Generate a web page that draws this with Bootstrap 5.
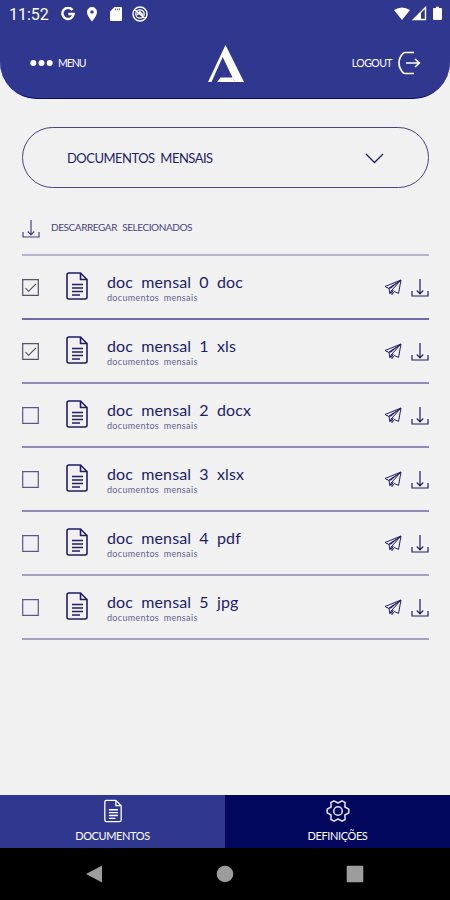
<!DOCTYPE html>
<html lang="pt">
<head>
<meta charset="utf-8">
<meta name="viewport" content="width=device-width, initial-scale=1">
<title>Documentos</title>
<link href="https://cdn.jsdelivr.net/npm/bootstrap@5.3.0/dist/css/bootstrap.min.css" rel="stylesheet">
<style>
:root{--ink:#211d66;--brand:#2f378f;--deep:#02065c}
body{font-family:Lato,"Open Sans",sans-serif;background:#f1f1f1;color:var(--ink);line-height:1}
svg{display:block;flex:none}
.screen{width:450px;height:900px}
.topbar{height:99px;background:var(--brand);border-bottom:1px solid #08087c;border-radius:0 0 37px 37px}
.status{height:28px;padding:0 6px 0 9px;font:400 16px Roboto,sans-serif}
.clock{width:39px;margin-right:13px;white-space:nowrap}
.pin{margin-left:9px}
.actions{height:70px;padding:0 29px 0 30px}
.side{width:160px}
.menu-text{font-size:10.500px;letter-spacing:-1.050px;margin-left:5px}
.logout-text{font-size:10.500px;letter-spacing:-.550px;margin-right:5px}
.main-area{padding:28px 21px 0 22px}
.picker{height:61px;border:1px solid #47437f;border-radius:31px;padding:2px 44px 0;background:none;color:var(--ink);font-size:13px;letter-spacing:-.520px;word-spacing:3px}
.bulk{height:66px;padding-top:15px;font-size:10px;letter-spacing:-.420px;word-spacing:3px;gap:11px;color:#48447e}
.bulk-text{padding-bottom:4px}
.files{border-top:2px solid #b5b4cb}
.file{height:64px;border-bottom:2px solid #8e8bb5}
.file:first-child{border-bottom-color:#706ca5}
.file:nth-child(n+5){border-bottom-color:#a3a1c3}
.tick{width:17px;height:17px;margin-right:27px}
.sheet{margin-bottom:2px}
.labels{margin-left:19px;padding-top:2px}
.fname{font-size:16px;letter-spacing:.120px;word-spacing:4px}
.fsub{font-size:9px;letter-spacing:.330px;word-spacing:2px;color:#625f8e;margin-top:3px}
.send{margin-right:9px}
.fetch{margin-top:2px}
.tabs{height:53px;font-size:11px}
.tab-on{background:var(--brand)}
.tab-off{background:var(--deep)}
.tabs span{margin-top:7px;letter-spacing:-.4px}
.sysnav{height:52px;padding:0 86px 0 85px}
</style>
<script src="https://cdn.jsdelivr.net/npm/bootstrap@5.3.0/dist/js/bootstrap.bundle.min.js"></script>
</head>
<body>
<svg width="0" height="0" class="position-absolute">
<symbol id="doc" viewBox="0 0 22 28"><path d="M3 1h11.500L21 7.500V25a2 2 0 0 1-2 2H3a2 2 0 0 1-2-2V3a2 2 0 0 1 2-2zM14.500 1v6.500H21" fill="none" stroke="currentColor" stroke-width="1.600" stroke-linejoin="round"/><path d="M6 12.500h11M6 16h11M6 19.500h11M6 23h8" stroke="currentColor" stroke-width="1.600"/></symbol>
<symbol id="down" viewBox="0 0 18 18"><path d="M9 0v14M5.800 11.500L9 14.800l3.200-3.300M1 12v5h16v-5" fill="none" stroke="currentColor" stroke-width="1.200"/></symbol>
<symbol id="send" viewBox="0 0 18 17"><path d="M17 1L1 7.500l4 2L17 1l-9 10v4.500l2.500-3 4 2L17 1M5 9.500l.8 5L8 11M5.800 14.500l4-3" fill="none" stroke="currentColor" stroke-width="1" stroke-linejoin="round"/><path d="M17 1L5 8.500l1.500 1.200z" fill="currentColor"/></symbol>
<symbol id="box" viewBox="0 0 17 17"><path d="M.7.7h15.600v15.600H.7z" fill="none" stroke="#5b5788" stroke-width="1.200"/></symbol>
<symbol id="checked" viewBox="0 0 17 17"><path d="M.7.7h15.600v15.600H.7z" fill="none" stroke="#555269" stroke-width="1.200"/><path d="M3.500 9l3 3.300L14 4.800" fill="none" stroke="#444155" stroke-width="1.100"/></symbol>
</svg>
<div class="screen d-flex flex-column overflow-hidden">
<header class="topbar text-white">
  <div class="status d-flex align-items-center">
    <span class="clock">11:52</span>
    <svg width="14" height="14" viewBox="0 0 14 14"><path d="M11.500 3A5.600 5.600 0 1 0 12.600 7H7.300" fill="none" stroke="#fff" stroke-width="2.400"/></svg>
    <svg class="pin" width="16" height="16" viewBox="0 0 16 16"><path d="M8 1a5 5 0 0 0-5 5c0 4 5 9.500 5 9.500S13 10 13 6a5 5 0 0 0-5-5zm0 3.200a1.700 1.700 0 1 1 0 3.400 1.700 1.700 0 0 1 0-3.400z" fill="#fff" fill-rule="evenodd"/></svg>
    <svg class="ms-2" width="16" height="16" viewBox="0 0 16 16"><path d="M6.500 1H13a1 1 0 0 1 1 1v12a1 1 0 0 1-1 1H3a1 1 0 0 1-1-1V5.500z" fill="#fff"/><path d="M7.500 2.500v1.800M9.500 2.500v1.800M11.500 2.500v1.800" stroke="#2f378f" stroke-width=".8"/></svg>
    <svg class="ms-2" width="16" height="16" viewBox="0 0 16 16"><g fill="none" stroke="#fff"><circle cx="8" cy="8" r="7" stroke-width="1.500"/><circle cx="8" cy="8" r="4.200" stroke-width="1.300"/><path d="M3 4l9.500 8M5 9l3-3 3 3" stroke-width="1.600"/></g></svg>
    <svg class="ms-auto" width="50" height="16" viewBox="0 0 50 16"><path d="M0 4Q8-1 16 4L8 14z" fill="#fff"/><path d="M31.500 1.500v12h-12z" fill="none" stroke="#fff" stroke-width="1.400"/><path d="M27 6v7h-7z" fill="#fff"/><path d="M40 2h2V.7h3V2h2a1 1 0 0 1 1 1v10a1 1 0 0 1-1 1h-7a1 1 0 0 1-1-1V3a1 1 0 0 1 1-1z" fill="#fff"/></svg>
  </div>
  <div class="actions d-flex align-items-center justify-content-between">
    <div class="side d-flex align-items-center">
      <svg width="23" height="6" viewBox="0 0 23 6" fill="#fff"><circle cx="3.300" cy="3" r="3"/><circle cx="11.500" cy="3" r="3"/><circle cx="19.700" cy="3" r="3"/></svg>
      <span class="menu-text">MENU</span>
    </div>
    <svg width="36" height="37" viewBox="0 0 36 37"><path d="M17.500 0L36 37H9l3.500-4.500h12L14.700 12 3.500 37H0z" fill="#fff"/><path d="M25 33l2 3.500" stroke="#aaa" stroke-width=".6"/></svg>
    <div class="side d-flex align-items-center justify-content-end">
      <span class="logout-text">LOGOUT</span>
      <svg width="24" height="24" viewBox="0 0 24 24" fill="none" stroke="#fff" stroke-width="1.700"><path d="M17 1.500H8Q6.500 1.500 5.500 3 2 7 2 12t3.500 9q1 1.500 2.500 1.500h9"/><path d="M9 12h13M18 8l4.300 4-4.300 4"/></svg>
    </div>
  </div>
</header>
<main class="main-area flex-grow-1">
  <button type="button" class="picker w-100 d-flex align-items-center justify-content-between">DOCUMENTOS MENSAIS
    <svg width="19" height="11" viewBox="0 0 19 11"><path d="M1 1l8.500 8.500L18 1" fill="none" stroke="currentColor" stroke-width="1.300"/></svg>
  </button>
  <div class="bulk d-flex align-items-center"><svg width="18" height="18"><use href="#down"/></svg><span class="bulk-text">DESCARREGAR SELECIONADOS</span></div>
  <div class="files" id="files"></div>
</main>
<nav class="tabs d-flex text-white">
  <div class="tab-on w-50 d-flex flex-column align-items-center pt-1"><svg width="18" height="24"><use href="#doc"/></svg><span>DOCUMENTOS</span></div>
  <div class="tab-off w-50 d-flex flex-column align-items-center pt-1"><svg width="24" height="24" viewBox="0 0 24 24" fill="none" stroke="#e4e4f4" stroke-width="1.500" stroke-linejoin="round"><path d="M22.800 10.200v3.600L18.900 16l.2 4.500-3.100 1.700-4-2.200-4 2.200-3.100-1.700.2-4.500-3.900-2.200v-3.600L5.100 8l-.2-4.500L8 1.800 12 4l4-2.200 3.100 1.700-.2 4.500z"/><circle cx="12" cy="12" r="4.300"/></svg><span>DEFINIÇÕES</span></div>
</nav>
<div class="sysnav bg-black d-flex align-items-center justify-content-between">
  <svg width="18" height="18" viewBox="0 0 18 18"><path d="M1 9L17 .5v17z" fill="#9d9d9d"/></svg>
  <svg width="18" height="18"><circle cx="9" cy="9" r="8.300" fill="#9d9d9d"/></svg>
  <svg width="18" height="18"><rect x=".7" y=".7" width="16.600" height="16.600" rx="1" fill="#9d9d9d"/></svg>
</div>
</div>
<script>
document.getElementById('files').innerHTML = ['0 doc','1 xls','2 docx','3 xlsx','4 pdf','5 jpg'].map((n,i)=>`
<div class="file d-flex align-items-center">
  <svg class="tick"><use href="#${i<2?'checked':'box'}"/></svg>
  <svg class="sheet" width="22" height="28"><use href="#doc"/></svg>
  <div class="labels"><div class="fname">doc mensal ${n}</div><div class="fsub">documentos mensais</div></div>
  <svg class="send ms-auto" width="18" height="17"><use href="#send"/></svg>
  <svg class="fetch" width="18" height="18"><use href="#down"/></svg>
</div>`).join('');
</script>
</body>
</html>
